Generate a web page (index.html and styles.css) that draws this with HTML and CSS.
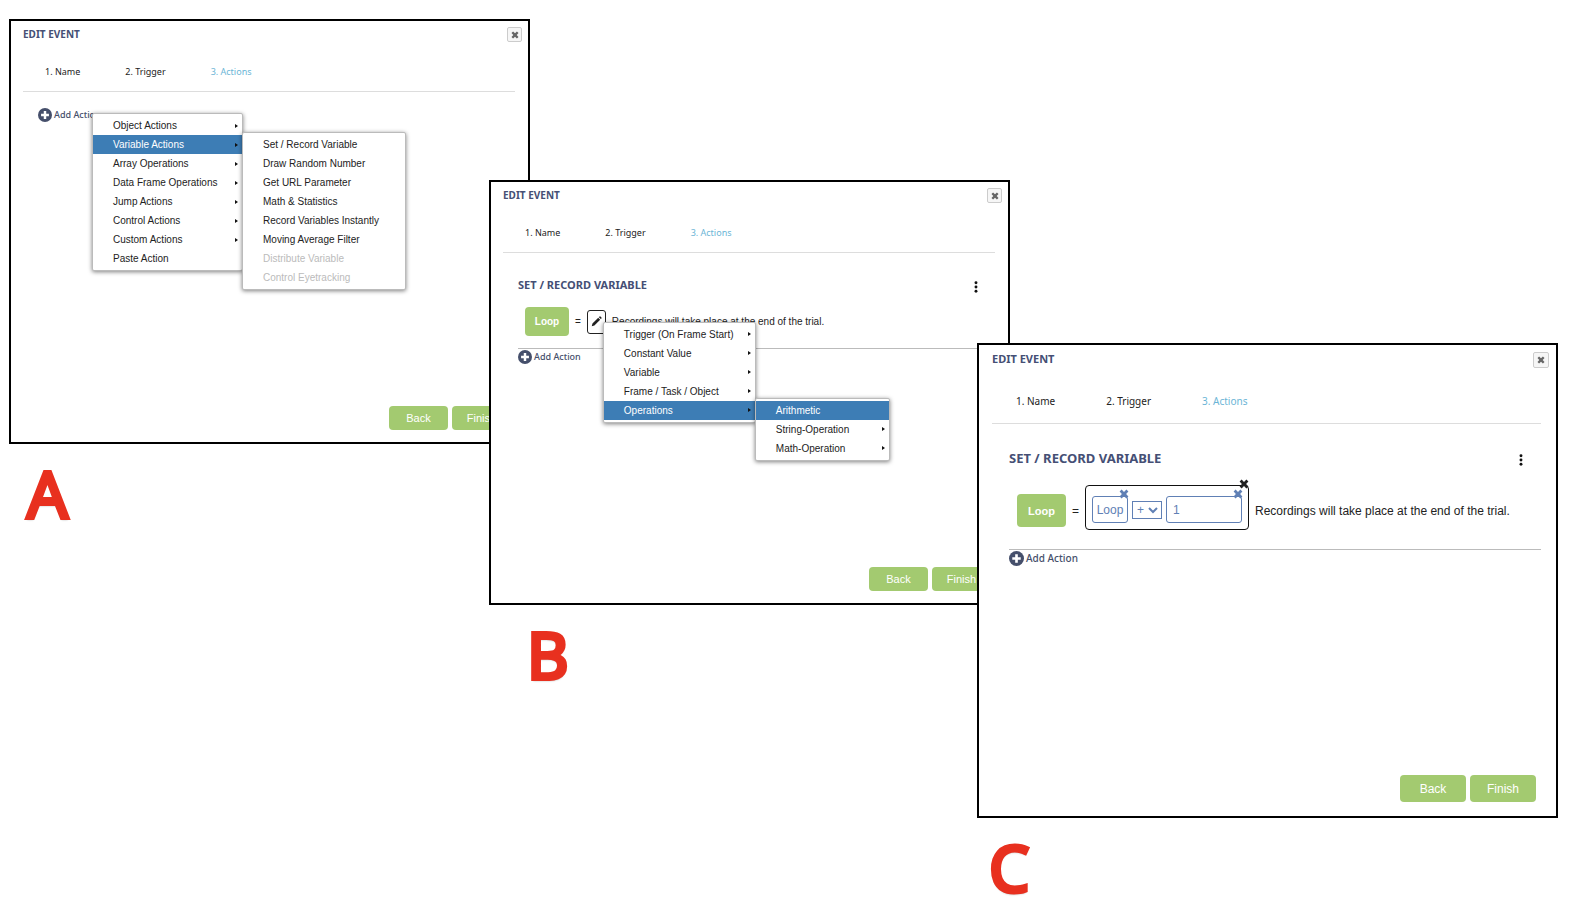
FILE: index.html
```html
<!doctype html>
<html lang="en">
<head>
<meta charset="utf-8">
<meta name="viewport" content="width=device-width, initial-scale=1.0">
<link rel="stylesheet" href="styles.css">
<title>Edit Event</title>
</head>
<body>

<!-- shared icons -->
<svg class="sprite" width="0" height="0" aria-hidden="true">
<symbol id="icon-close" viewBox="0 0 10 10">
<path d="M2.6 .6 5 2.9 7.4 .6 9.4 2.6 7.1 5 9.4 7.4 7.4 9.4 5 7.1 2.6 9.4 .6 7.4 2.9 5 .6 2.6Z"/>
</symbol>
<symbol id="icon-plus" viewBox="0 0 16 16">
<circle cx="8" cy="8" r="8"/>
<path d="M8 3.5v9M3.5 8h9" stroke="#fff" stroke-width="2.8"/>
</symbol>
<symbol id="icon-dots" viewBox="0 0 4 14">
<circle cx="2" cy="2" r="1.7"/><circle cx="2" cy="7" r="1.7"/><circle cx="2" cy="12" r="1.7"/>
</symbol>
<symbol id="icon-pencil" viewBox="0 0 12 12">
<path d="M.8 11.2 1.6 8.3 7.9 2 10 4.1 3.7 10.4ZM8.6 1.3 9.3.6Q9.8.2 10.3.6L11.4 1.7Q11.8 2.2 11.4 2.7L10.7 3.4Z"/>
</symbol>
</svg>

<main class="steps">

<figure class="step step-a">
<section class="dialog">
<header class="dialog-header">
<h2>EDIT EVENT</h2>
<button class="close" aria-label="Close"><svg><use href="#icon-close"/></svg></button>
</header>
<nav class="tabs">
<a href="#name">1. Name</a>
<a href="#trigger">2. Trigger</a>
<a href="#actions" class="current">3. Actions</a>
</nav>
<div class="content">
<div class="anchor">
<button class="add-action"><svg><use href="#icon-plus"/></svg>Add Action</button>
<ul class="menu action-menu">
<li><button class="more">Object Actions</button></li>
<li>
<button class="more active">Variable Actions</button>
<ul class="menu submenu">
<li><button>Set / Record Variable</button></li>
<li><button>Draw Random Number</button></li>
<li><button>Get URL Parameter</button></li>
<li><button>Math &amp; Statistics</button></li>
<li><button>Record Variables Instantly</button></li>
<li><button>Moving Average Filter</button></li>
<li><button disabled>Distribute Variable</button></li>
<li><button disabled>Control Eyetracking</button></li>
</ul>
</li>
<li><button class="more">Array Operations</button></li>
<li><button class="more">Data Frame Operations</button></li>
<li><button class="more">Jump Actions</button></li>
<li><button class="more">Control Actions</button></li>
<li><button class="more">Custom Actions</button></li>
<li><button>Paste Action</button></li>
</ul>
</div>
</div>
<footer class="dialog-footer">
<button class="btn">Back</button>
<button class="btn">Finish</button>
</footer>
</section>
<figcaption>A</figcaption>
</figure>

<figure class="step step-b">
<section class="dialog">
<header class="dialog-header">
<h2>EDIT EVENT</h2>
<button class="close" aria-label="Close"><svg><use href="#icon-close"/></svg></button>
</header>
<nav class="tabs">
<a href="#name">1. Name</a>
<a href="#trigger">2. Trigger</a>
<a href="#actions" class="current">3. Actions</a>
</nav>
<div class="content">
<article class="action">
<div class="action-title">
<h3>SET / RECORD VARIABLE</h3>
<button class="dots" aria-label="Options"><svg><use href="#icon-dots"/></svg></button>
</div>
<div class="assign">
<button class="variable">Loop</button>
<span>=</span>
<div class="anchor">
<button class="edit" aria-label="Edit value"><svg><use href="#icon-pencil"/></svg></button>
<ul class="menu value-menu">
<li><button class="more">Trigger (On Frame Start)</button></li>
<li><button class="more">Constant Value</button></li>
<li><button class="more">Variable</button></li>
<li><button class="more">Frame / Task / Object</button></li>
<li>
<button class="more active">Operations</button>
<ul class="menu submenu operations">
<li><button class="active">Arithmetic</button></li>
<li><button class="more">String-Operation</button></li>
<li><button class="more">Math-Operation</button></li>
</ul>
</li>
</ul>
</div>
<p>Recordings will take place at the end of the trial.</p>
</div>
</article>
<button class="add-action"><svg><use href="#icon-plus"/></svg>Add Action</button>
</div>
<footer class="dialog-footer">
<button class="btn">Back</button>
<button class="btn">Finish</button>
</footer>
</section>
<figcaption>B</figcaption>
</figure>

<figure class="step step-c">
<section class="dialog large">
<header class="dialog-header">
<h2>EDIT EVENT</h2>
<button class="close" aria-label="Close"><svg><use href="#icon-close"/></svg></button>
</header>
<nav class="tabs">
<a href="#name">1. Name</a>
<a href="#trigger">2. Trigger</a>
<a href="#actions" class="current">3. Actions</a>
</nav>
<div class="content">
<article class="action">
<div class="action-title">
<h3>SET / RECORD VARIABLE</h3>
<button class="dots" aria-label="Options"><svg><use href="#icon-dots"/></svg></button>
</div>
<div class="assign">
<button class="variable">Loop</button>
<span>=</span>
<div class="expression">
<div class="operand">
<button class="operand-variable">Loop</button>
<button class="remove" aria-label="Remove variable"><svg><use href="#icon-close"/></svg></button>
</div>
<select aria-label="Operator">
<option>+</option>
<option>-</option>
<option>*</option>
<option>/</option>
</select>
<div class="operand">
<input type="text" value="1" aria-label="Value">
<button class="remove" aria-label="Remove value"><svg><use href="#icon-close"/></svg></button>
</div>
<button class="remove" aria-label="Remove expression"><svg><use href="#icon-close"/></svg></button>
</div>
<p>Recordings will take place at the end of the trial.</p>
</div>
</article>
<button class="add-action"><svg><use href="#icon-plus"/></svg>Add Action</button>
</div>
<footer class="dialog-footer">
<button class="btn">Back</button>
<button class="btn">Finish</button>
</footer>
</section>
<figcaption>C</figcaption>
</figure>

</main>
</body>
</html>
```
FILE: styles.css
```css
* {
    box-sizing: border-box;
}
body,
h2,
h3,
p,
ul,
figure {
    margin: 0;
    padding: 0;
}
body {
    font-family: "Liberation Sans", Arial, sans-serif;
    font-size: 10px;
    color: #222;
    background-color: white;
}
button,
input,
select {
    margin: 0;
    padding: 0;
    border: 0;
    background: none;
    font: inherit;
    color: inherit;
}
svg {
    display: block;
    fill: currentColor;
}
.sprite {
    position: absolute;
}

/* three overlapping dialogs, stepping down to the right */
.steps {
    display: grid;
    grid-template-columns: 480fr 41fr 447fr 33fr 548fr;
    align-items: start;
    padding: 19px 18px 0 9px;
}
.step {
    grid-row: 1;
}
.step-a {
    grid-column: 1 / 3;
}
.step-b {
    grid-column: 2 / 5;
    margin-top: 161px;
}
.step-c {
    grid-column: 4 / 6;
    margin-top: 324px;
}
figcaption {
    margin-top: 10px;
    padding-left: 18px;
    font-family: "Noto Sans", sans-serif;
    font-size: 64px;
    line-height: 80px;
    color: #e8301f;
    -webkit-text-stroke: 4px #e8301f;
    text-shadow: 0 2px 2px rgba(0, 0, 0, 0.3);
}
.step-b figcaption {
    padding-left: 38px;
}
.step-c figcaption {
    padding-left: 12px;
}

/* dialog */
.dialog {
    display: flex;
    flex-direction: column;
    min-height: 425px;
    border: 2px solid #000;
    background: #fff;
}
.dialog-header {
    display: flex;
    justify-content: space-between;
    padding: 6px 6px 0 12px;
}
h2,
h3,
.tabs,
.add-action {
    font-family: "Noto Sans", "Open Sans", sans-serif;
}
h2 {
    font-size: 10px;
    line-height: 14px;
    color: #454f75;
}
.close {
    display: flex;
    align-items: center;
    justify-content: center;
    width: 15px;
    height: 15px;
    border: 1px solid #ccc;
    border-radius: 2px;
    background: #f6f6f6;
    color: #666;
}
.close svg {
    width: 8px;
    height: 8px;
}
.tabs {
    display: flex;
    gap: 45px;
    margin: 20px 13px 0 12px;
    padding: 0 22px 9px;
    border-bottom: 1px solid #ddd;
    font-size: 9px;
    line-height: 20px;
}
.tabs a {
    color: #222;
    text-decoration: none;
}
.tabs .current {
    color: #6bb5d6;
}
.content {
    padding: 16px 13px 0 27px;
}
.add-action {
    display: flex;
    align-items: center;
    gap: 2px;
    font-size: 9px;
    font-weight: 500;
    line-height: 14px;
    color: #454f6b;
}
.add-action svg {
    width: 14px;
    height: 14px;
}
.dialog-footer {
    display: flex;
    justify-content: flex-end;
    gap: 4px;
    margin-top: auto;
    padding: 0 17px 12px;
}
.btn {
    width: 59px;
    height: 24px;
    border-radius: 4px;
    background: #a3ca70;
    font-size: 11px;
    color: #fff;
}

/* action */
.action {
    margin-bottom: 1px;
    padding: 6px 0 12px;
    border-bottom: 1px solid #bbb;
}
.action-title {
    display: flex;
    align-items: center;
    justify-content: space-between;
    padding-right: 17px;
}
h3 {
    font-size: 11px;
    line-height: 20px;
    color: #454f75;
}
.dots {
    padding-top: 4px;
}
.dots svg {
    width: 4px;
    height: 12px;
    color: #111;
}
.assign {
    display: flex;
    align-items: center;
    gap: 6px;
    margin-top: 12px;
    padding-left: 7px;
}
.assign p {
    white-space: nowrap;
}
.variable {
    width: 44px;
    height: 29px;
    border-radius: 4px;
    background: #a3ca70;
    font-weight: bold;
    color: #fff;
}
.edit {
    display: flex;
    align-items: center;
    justify-content: center;
    width: 19px;
    height: 24px;
    border: 1px solid #222;
    border-radius: 3px;
}
.edit svg {
    width: 11px;
    height: 11px;
}

/* menus */
.anchor,
.menu li {
    position: relative;
}
.menu {
    position: absolute;
    z-index: 1;
    padding: 2px 0;
    border: 1px solid #bbb;
    border-radius: 2px;
    background: #fff;
    box-shadow: 0 1px 4px rgba(0, 0, 0, 0.5);
    list-style: none;
}
.menu button {
    display: flex;
    align-items: center;
    justify-content: space-between;
    width: 100%;
    height: 19px;
    padding: 0 4px 0 20px;
    white-space: nowrap;
}
.menu button:disabled {
    color: #bbb;
}
.menu .active {
    background: #3d7db5;
    color: #fff;
}
.menu .more:after {
    content: "";
    border: 2px solid transparent;
    border-left: 3px solid #111;
    border-right: 0;
}
.action-menu {
    top: 5px;
    left: 54px;
    width: 151px;
}
.submenu {
    top: -3px;
    left: 100%;
    width: 164px;
}
.value-menu {
    top: 12px;
    left: 16px;
    width: 153px;
}
.operations {
    width: 135px;
}

/* large dialog */
.large {
    min-height: 475px;
    font-size: 12px;
}
.large .dialog-header {
    padding: 7px 7px 0 13px;
}
.large h2 {
    font-size: 11px;
}
.large .tabs,
.large .add-action {
    font-size: 10px;
}
.large .close {
    width: 16px;
    height: 16px;
}
.large .tabs {
    gap: 51px;
    margin: 23px 15px 0 13px;
    padding: 0 24px 12px;
}
.large .content {
    padding: 18px 15px 0 30px;
}
.large h3 {
    font-size: 13px;
    line-height: 20px;
}
.large .action-title {
    padding-right: 18px;
}
.large .action {
    padding-bottom: 13px;
}
.large .assign {
    gap: 6px;
    margin-top: 17px;
    padding-left: 8px;
}
.large .variable {
    width: 49px;
    height: 33px;
    font-size: 11px;
}
.large .add-action {
    line-height: 15px;
}
.large .add-action svg {
    width: 15px;
    height: 15px;
}
.large .dialog-footer {
    padding: 0 20px 14px;
}
.large .btn {
    width: 66px;
    height: 27px;
    font-size: 12px;
}
.expression {
    position: relative;
    display: flex;
    align-items: center;
    gap: 4px;
    margin-bottom: 6px;
    padding: 10px 6px 6px;
    border: 1px solid #111;
    border-radius: 4px;
}
.operand {
    position: relative;
    color: #6080b5;
}
.operand-variable,
.operand input {
    display: block;
    height: 27px;
    border: 1px solid #6080b5;
    border-radius: 3px;
}
.operand-variable {
    width: 36px;
}
.operand input {
    width: 76px;
    padding: 0 6px;
}
.expression select {
    width: 30px;
    height: 18px;
    border: 1px solid #6080b5;
    color: #6080b5;
}
.remove {
    position: absolute;
    top: -7px;
    right: -1px;
}
.remove svg {
    width: 10px;
    height: 10px;
}
```
